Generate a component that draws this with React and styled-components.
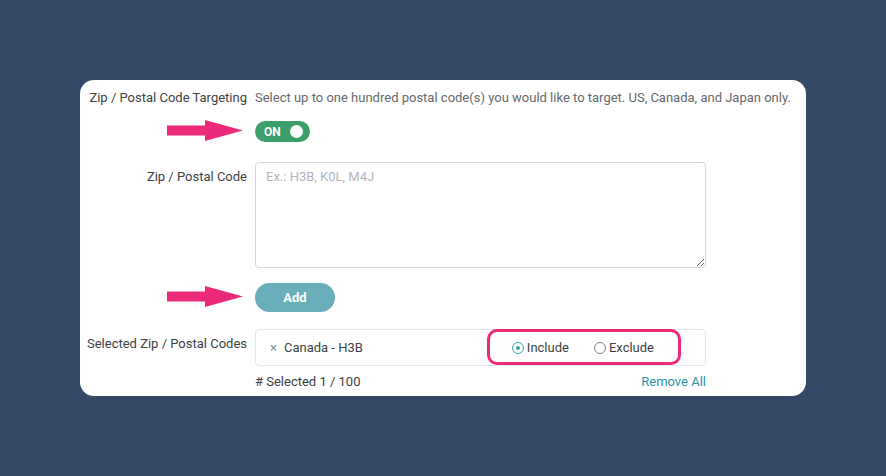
import React from "react";
import styled, { createGlobalStyle } from "styled-components";

const Global = createGlobalStyle`
  html, body { margin: 0; padding: 0; }
  body {
    background: #344867;
    font-family: Roboto, "Liberation Sans", Arial, sans-serif;
    -webkit-font-smoothing: antialiased;
  }
`;

const Page = styled.div`
  height: 476px;
  display: flex;
  align-items: center;
  justify-content: center;
`;

const Card = styled.div`
  position: relative;
  width: 726px;
  height: 316px;
  box-sizing: border-box;
  background: #fff;
  border-radius: 14px;
  padding: 8px 0 0 0;
  display: grid;
  grid-template-columns: 167px 1fr;
  column-gap: 8px;
  align-content: start;
`;

const Label = styled.div`
  font-size: 13px;
  line-height: 20px;
  color: #3d3f44;
  text-align: right;
  white-space: nowrap;
  margin-top: ${(p) => p.$top || 0}px;
  padding-top: ${(p) => p.$pad || 0}px;
`;

const Cell = styled.div`
  margin-top: ${(p) => p.$top || 0}px;
  position: relative;
  min-width: 0;
`;

const Description = styled.div`
  font-size: 13px;
  line-height: 20px;
  color: #66686d;
  white-space: nowrap;
`;

const Toggle = styled.div`
  width: 55px;
  height: 21px;
  border-radius: 11px;
  background: #3c9f6b;
  display: flex;
  align-items: center;
  justify-content: space-between;
  padding: 0 7px 0 9px;
  box-sizing: border-box;
  color: #fff;
  font-size: 12px;
  font-weight: 700;
`;

const Knob = styled.span`
  width: 13px;
  height: 13px;
  border-radius: 50%;
  background: #fff;
`;

const TextArea = styled.textarea`
  display: block;
  width: 451px;
  height: 106px;
  box-sizing: border-box;
  border: 1px solid #d6d7dc;
  border-radius: 4px;
  padding: 5px 10px;
  font-family: Roboto, "Liberation Sans", Arial, sans-serif;
  font-size: 13px;
  line-height: 18px;
  color: #333;
  resize: vertical;
  outline: none;
  &::placeholder { color: #b2b5bc; }
`;

const AddButton = styled.button`
  width: 80px;
  height: 29px;
  border: none;
  border-radius: 15px;
  background: #6aaebc;
  color: #fff;
  font-family: Roboto, "Liberation Sans", Arial, sans-serif;
  font-size: 13px;
  font-weight: 700;
  padding: 0;
`;

const SelectedBox = styled.div`
  position: relative;
  width: 451px;
  height: 37px;
  box-sizing: border-box;
  border: 1px solid #e4e5e8;
  border-radius: 4px;
  display: flex;
  align-items: center;
  padding-left: 14px;
  font-size: 13px;
  color: #3d3f44;
`;

const Tag = styled.div`
  display: flex;
  align-items: center;
  gap: 7px;
  flex: 1;
`;

const Remove = styled.span`
  color: #8a8d93;
  font-size: 13px;
`;

const RadioGroup = styled.div`
  display: flex;
  align-items: center;
  gap: 25px;
  margin-right: 51px;
`;

const RadioOption = styled.label`
  display: flex;
  align-items: center;
  gap: 3px;
  font-size: 13px;
  color: #3d3f44;
`;

const RadioCircle = styled.span`
  width: 12px;
  height: 12px;
  box-sizing: border-box;
  border-radius: 50%;
  border: 1.3px solid ${(p) => (p.$on ? "#3a9fae" : "#7c808a")};
  display: flex;
  align-items: center;
  justify-content: center;
  &::after {
    content: "";
    width: 4px;
    height: 4px;
    border-radius: 50%;
    background: ${(p) => (p.$on ? "#3a9fae" : "transparent")};
  }
`;

const Highlight = styled.div`
  position: absolute;
  left: 231px;
  top: -1px;
  width: 194px;
  height: 36px;
  box-sizing: border-box;
  border: 3px solid #ec2a7c;
  border-radius: 10px;
  pointer-events: none;
`;

const Footer = styled.div`
  width: 451px;
  display: flex;
  justify-content: space-between;
  font-size: 13px;
  line-height: 18px;
  color: #3d3f44;
`;

const Link = styled.a`
  color: #2b93a6;
  text-decoration: none;
`;

const Arrow = styled.svg`
  position: absolute;
  left: ${(p) => p.$left}px;
  top: ${(p) => p.$top}px;
`;

const PinkArrow = ({ left, top }) => (
  <Arrow $left={left} $top={top} width="76" height="21" viewBox="0 0 76 21">
    <path d="M0 5.5 H38 V0 L76 10.5 L38 21 V15.5 H0 Z" fill="#ec2a7c" />
  </Arrow>
);

export default function App() {
  return (
    <Page>
      <Global />
      <Card>
        <Label>Zip / Postal Code Targeting</Label>
        <Cell>
          <Description>
            Select up to one hundred postal code(s) you would like to target. US, Canada, and Japan only.
          </Description>
        </Cell>

        <Label $top={13} />
        <Cell $top={13}>
          <Toggle>
            ON
            <Knob />
          </Toggle>
        </Cell>

        <Label $top={20} $pad={5}>Zip / Postal Code</Label>
        <Cell $top={20}>
          <TextArea placeholder="Ex.: H3B, K0L, M4J" />
        </Cell>

        <Label $top={15} />
        <Cell $top={15}>
          <AddButton>Add</AddButton>
        </Cell>

        <Label $top={17} $pad={5}>Selected Zip / Postal Codes</Label>
        <Cell $top={17}>
          <SelectedBox>
            <Tag>
              <Remove>×</Remove>
              <span>Canada - H3B</span>
            </Tag>
            <RadioGroup>
              <RadioOption>
                <RadioCircle $on />
                Include
              </RadioOption>
              <RadioOption>
                <RadioCircle />
                Exclude
              </RadioOption>
            </RadioGroup>
            <Highlight />
          </SelectedBox>
        </Cell>

        <Label $top={7} />
        <Cell $top={7}>
          <Footer>
            <span># Selected 1 / 100</span>
            <Link>Remove All</Link>
          </Footer>
        </Cell>

        <PinkArrow left={87} top={40} />
        <PinkArrow left={87} top={206} />
      </Card>
    </Page>
  );
}
